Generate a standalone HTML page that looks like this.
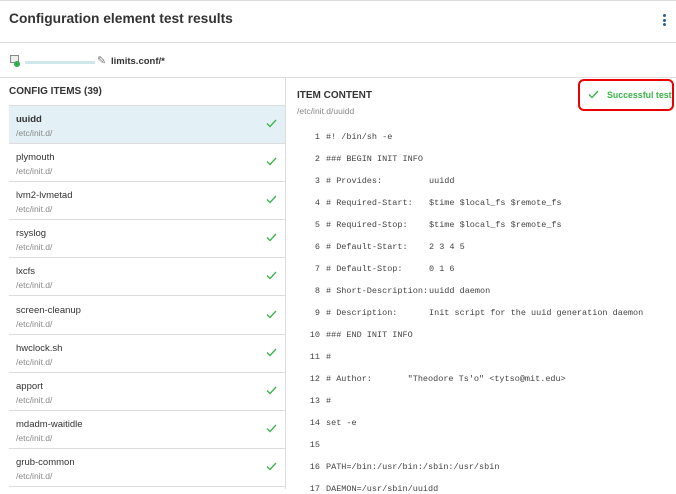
<!DOCTYPE html><html><head><style>
*{margin:0;padding:0;box-sizing:border-box}
body{width:676px;height:489px;overflow:hidden;background:#fff;font-family:"Liberation Sans",sans-serif;color:#333;position:relative}
.t{position:absolute}
.item{position:absolute;left:9px;width:276px;height:38px;border-bottom:1px solid #ddd}
.item .n{position:absolute;left:7px;top:8px;font-size:9.5px;color:#333}
.item .p{position:absolute;left:7px;top:22px;font-size:8.5px;color:#888}
.item svg{position:absolute;right:8px;top:13px}
.code{position:absolute;font-family:"Liberation Mono",monospace;font-size:8.5px;color:#444;white-space:pre}
</style></head><body>
<div style="position:absolute;left:0;top:0;width:676px;height:1px;background:#ddd"></div>
<div class="t" style="left:9px;top:11px;font-size:13.8px;font-weight:bold;color:#333">Configuration element test results</div>
<div class="t" style="left:663px;top:14px;width:3px;"><div style="width:3px;height:3px;border-radius:50%;background:#2a6496;margin-bottom:1.5px"></div><div style="width:3px;height:3px;border-radius:50%;background:#2a6496;margin-bottom:1.5px"></div><div style="width:3px;height:3px;border-radius:50%;background:#2a6496"></div></div>
<div style="position:absolute;left:0;top:42px;width:676px;height:1px;background:#ddd"></div>
<div class="t" style="left:10px;top:55px;width:9px;height:8px;border:1px solid #888;background:#eee"></div>
<div class="t" style="left:14px;top:61px;width:6px;height:6px;border-radius:50%;background:#2db04b"></div>
<div class="t" style="left:25px;top:61px;width:70px;height:3px;background:#cfe6ea"></div>
<div class="t" style="left:97px;top:54px;font-size:11px;color:#777">✎</div>
<div class="t" style="left:111px;top:56px;font-size:9.5px;font-weight:bold;color:#333">limits.conf/*</div>
<div style="position:absolute;left:0;top:77px;width:676px;height:1px;background:#ddd"></div>
<div style="position:absolute;left:285px;top:77px;width:1px;height:412px;background:#ddd"></div>
<div class="t" style="left:9px;top:86px;font-size:10px;font-weight:bold;color:#333">CONFIG ITEMS (39)</div>
<div style="position:absolute;left:9px;top:105px;width:276px;height:1px;background:#ddd"></div>
<div id="list"></div>
<div class="t" style="left:297px;top:90px;font-size:10px;font-weight:bold;color:#333">ITEM CONTENT</div>
<div class="t" style="left:297px;top:106px;font-size:8.5px;color:#888">/etc/init.d/uuidd</div>
<div class="t" style="left:578px;top:79px;width:96px;height:32px;border:2px solid #e00;border-radius:6px"></div>
<svg class="t" style="left:588px;top:90px" width="11" height="9" viewBox="0 0 11 9"><path d="M1 4.5L4 7.5L10 1" fill="none" stroke="#3cb54a" stroke-width="1.3"/></svg>
<div class="t" style="left:607px;top:90px;font-size:8.8px;font-weight:bold;color:#3cb54a">Successful test</div>
<div id="code"></div>
<script>
var items=["uuidd","plymouth","lvm2-lvmetad","rsyslog","lxcfs","screen-cleanup","hwclock.sh","apport","mdadm-waitidle","grub-common"];
var h="";items.forEach(function(n,i){h+='<div class="item" style="top:'+(106+i*38.1)+'px;'+(i==0?'background:#e3f0f5;':'')+'"><div class="n" style="'+(i==0?'font-weight:bold':'')+'">'+n+'</div><div class="p">/etc/init.d/</div><svg width="11" height="9" viewBox="0 0 11 9"><path d="M1 4.5L4 7.5L10 1" fill="none" stroke="#3cb54a" stroke-width="1.3"/></svg></div>'});
document.getElementById('list').innerHTML=h;
var L=[["#! /bin/sh -e",""],["### BEGIN INIT INFO",""],["# Provides:","uuidd"],["# Required-Start:","$time $local_fs $remote_fs"],["# Required-Stop:","$time $local_fs $remote_fs"],["# Default-Start:","2 3 4 5"],["# Default-Stop:","0 1 6"],["# Short-Description:","uuidd daemon"],["# Description:","Init script for the uuid generation daemon"],["### END INIT INFO",""],["#",""],["# Author:       \"Theodore Ts'o\" <tytso@mit.edu>",""],["#",""],["set -e",""],["",""],["PATH=/bin:/usr/bin:/sbin:/usr/sbin",""],["DAEMON=/usr/sbin/uuidd",""]];
var c="";L.forEach(function(l,i){var y=131.5+i*22;c+='<div class="code" style="left:296px;top:'+y+'px;width:24px;text-align:right">'+(i+1)+'</div><div class="code" style="left:326px;top:'+y+'px"></div><div class="code" style="left:429px;top:'+y+'px"></div>';});
document.getElementById('code').innerHTML=c;
var ds=document.querySelectorAll('#code .code');L.forEach(function(l,i){ds[i*3+1].textContent=l[0];ds[i*3+2].textContent=l[1];});
</script>
</body></html>
